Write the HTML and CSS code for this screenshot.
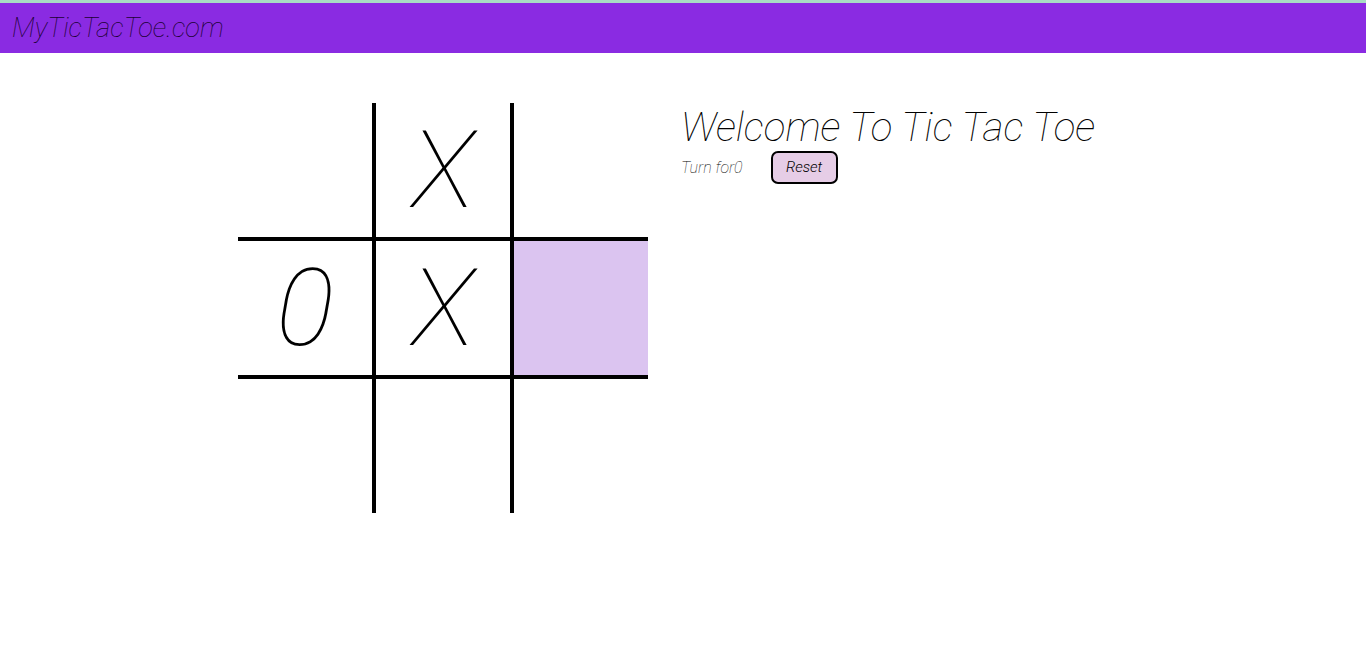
FILE: index.html
```html
<!DOCTYPE html>
<html lang="en">
<head>
<meta charset="utf-8">
<title>MyTicTacToe.com</title>
<link rel="stylesheet" href="styles.css">
</head>
<body>
<nav class="navbar">
  <span class="brand">MyTicTacToe.com</span>
</nav>
<main class="game">
  <div class="board">
    <div class="box"></div>
    <div class="box"><span class="mark">X</span></div>
    <div class="box"></div>
    <div class="box"><span class="mark">0</span></div>
    <div class="box"><span class="mark">X</span></div>
    <div class="box box-hover"></div>
    <div class="box"></div>
    <div class="box"></div>
    <div class="box"></div>
  </div>
  <section class="info">
    <h1 class="title">Welcome To Tic Tac Toe</h1>
    <div class="controls">
      <span class="turn">Turn for0</span>
      <button class="reset">Reset</button>
    </div>
  </section>
</main>
</body>
</html>
```

FILE: styles.css
```css
* { box-sizing: border-box; }

body {
  margin: 0;
  font-family: Roboto, "Liberation Sans", sans-serif;
  font-weight: 100;
  font-style: italic;
  background: #ffffff;
  color: #000;
}

.navbar {
  height: 53px;
  border-top: 3px solid #a8dcc4;
  background: #8a2be2;
  display: flex;
  align-items: center;
  padding-left: 12px;
}

.brand {
  font-size: 27.3px;
  color: #1a0033;
  line-height: 1;
  margin-top: 2px;
}

.game {
  display: flex;
  align-items: flex-start;
  padding-left: 238px;
  padding-top: 50px;
  gap: 33px;
}

.board {
  width: 410px;
  height: 410px;
  display: grid;
  grid-template-columns: repeat(3, 1fr);
  grid-template-rows: repeat(3, 1fr);
  gap: 4px;
  background: #000;
}

.box {
  background: #fff;
  display: flex;
  align-items: center;
  justify-content: center;
}

.box-hover { background: #dbc4f0; }

.mark {
  font-size: 108px;
  line-height: 1;
}

.title {
  margin: 0;
  font-size: 40.5px;
  font-weight: 100;
  line-height: 1.2;
}

.controls {
  display: flex;
  align-items: center;
  gap: 28px;
  margin-top: -1px;
}

.turn {
  font-size: 16px;
  color: #000;
}

.reset {
  font-family: Roboto, "Liberation Sans", sans-serif;
  font-style: italic;
  font-weight: 300;
  font-size: 15px;
  width: 67px;
  height: 33px;
  background: #e6cde6;
  border: 2px solid #000;
  border-radius: 7px;
  color: #000;
}
```
